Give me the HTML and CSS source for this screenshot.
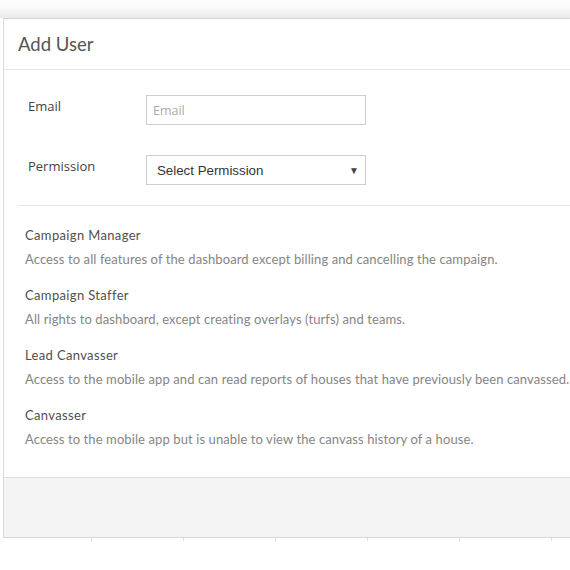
FILE: index.html
```html
<!DOCTYPE html>
<html lang="en">
<head>
    <meta charset="UTF-8">
    <meta name="viewport" content="width=device-width, initial-scale=1.0">
    <title>Add User</title>
    <link rel="stylesheet" href="styles.css">
</head>
<body>
    <div class="page-shade"></div>

    <div class="modal">
        <header class="modal-header">
            <h2 class="modal-title">Add User</h2>
        </header>

        <form class="user-form">
            <div class="form-row">
                <label class="form-label" for="email">Email</label>
                <input type="text" class="form-input" id="email" placeholder="Email">
            </div>
            <div class="form-row">
                <label class="form-label" for="permission">Permission</label>
                <div class="select-box" id="permission">
                    <span>Select Permission</span>
                    <span class="select-arrow">&#9660;</span>
                </div>
            </div>
        </form>

        <div class="roles">
            <div class="role">
                <div class="role-name">Campaign Manager</div>
                <div class="role-desc">Access to all features of the dashboard except billing and cancelling the campaign.</div>
            </div>
            <div class="role">
                <div class="role-name">Campaign Staffer</div>
                <div class="role-desc">All rights to dashboard, except creating overlays (turfs) and teams.</div>
            </div>
            <div class="role">
                <div class="role-name">Lead Canvasser</div>
                <div class="role-desc">Access to the mobile app and can read reports of houses that have previously been canvassed.</div>
            </div>
            <div class="role">
                <div class="role-name">Canvasser</div>
                <div class="role-desc">Access to the mobile app but is unable to view the canvass history of a house.</div>
            </div>
        </div>

        <footer class="modal-footer"></footer>
    </div>

    <div class="page-grid">
        <span></span><span></span><span></span><span></span><span></span><span></span><span></span>
    </div>
</body>
</html>
```

FILE: styles.css
```css
body {
    margin: 0;
    background-color: white;
    overflow: hidden;
    font-family: Lato, "Open Sans", sans-serif;
}

.page-shade {
    height: 18px;
    background: linear-gradient(to bottom, #fdfdfd, #fafafa 40%, #e9e9e9);
}

.modal {
    margin-left: 3px;
    width: 620px;
    background-color: white;
    border-left: 1px solid #dcdcdc;
    border-top: 1px solid #d6d6d6;
    border-bottom: 1px solid #d8d8d8;
}

.modal-header {
    height: 50px;
    padding-left: 14px;
    display: flex;
    align-items: center;
    border-bottom: 1px solid #e8e8e8;
}

.modal-title {
    margin: 0;
    font-size: 18.5px;
    font-weight: 400;
    color: #555;
}

.user-form {
    padding: 25px 0 20px 24px;
}

.form-row {
    display: flex;
    align-items: center;
    height: 30px;
}

.form-row + .form-row {
    margin-top: 30px;
}

.form-label {
    width: 118px;
    margin-top: -8px;
    font-family: "Open Sans", sans-serif;
    font-size: 13px;
    color: #444;
}

.form-input {
    box-sizing: border-box;
    width: 220px;
    height: 30px;
    margin: 0;
    padding: 0 6px;
    border: 1px solid #cfcfcf;
    border-radius: 0;
    font-family: "Open Sans", sans-serif;
    font-size: 12.5px;
    color: #444;
}

.form-input::placeholder {
    color: #aaa;
}

.select-box {
    box-sizing: border-box;
    width: 220px;
    height: 30px;
    padding: 0 6px 0 10px;
    display: flex;
    align-items: center;
    justify-content: space-between;
    border: 1px solid #cfcfcf;
    font-family: "Liberation Sans", Arial, sans-serif;
    font-size: 13.3px;
    color: #333;
}

.select-arrow {
    font-size: 10px;
    color: #444;
}

.roles {
    margin: 0 0 0 14px;
    padding: 11px 0 20px 7px;
    border-top: 1px solid #e6e6e6;
}

.role {
    height: 60px;
}

.role-name {
    padding-top: 10px;
    font-size: 13px;
    letter-spacing: 0.35px;
    color: #505050;
}

.role-desc {
    margin-top: 8px;
    font-size: 13px;
    letter-spacing: 0.1px;
    color: #858585;
}

.modal-footer {
    height: 59px;
    background-color: #f4f4f4;
    border-top: 1px solid #dedede;
}

.page-grid {
    display: flex;
    height: 3px;
}

.page-grid span {
    width: 91px;
    flex-shrink: 0;
    border-right: 1px solid #e2e2e2;
}
```
